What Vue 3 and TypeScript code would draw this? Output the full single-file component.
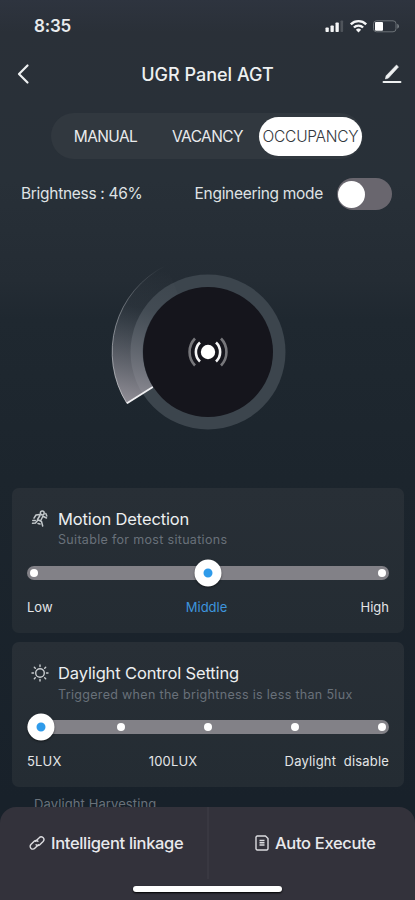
<script setup lang="ts">
import { ref } from 'vue'

interface Setting {
  id: string
  title: string
  hint: string
  stops: number[]
  active: number
  labels: { text: string; selected?: boolean }[]
}

const modes = ['MANUAL', 'VACANCY', 'OCCUPANCY']
const mode = ref('OCCUPANCY')
const engineering = ref(false)
const brightness = ref(46)

const settings = ref<Setting[]>([
  {
    id: 'motion',
    title: 'Motion Detection',
    hint: 'Suitable for most situations',
    stops: [7, 181, 355],
    active: 1,
    labels: [{ text: 'Low' }, { text: 'Middle', selected: true }, { text: 'High' }],
  },
  {
    id: 'daylight',
    title: 'Daylight Control Setting',
    hint: 'Triggered when the brightness is less than 5lux',
    stops: [14, 94, 181, 268, 355],
    active: 0,
    labels: [{ text: '5LUX' }, { text: '100LUX' }, { text: 'Daylight  disable' }],
  },
])
</script>

<template>
  <div class="screen">
    <header class="status">
      <span class="clock">8:35</span>
      <svg class="status-icons" width="78" height="16" viewBox="0 0 78 16">
        <g fill="#f4f5f6">
          <rect x="1.500" y="9.500" width="3.300" height="4.500" rx=".8" />
          <rect x="6.500" y="7.500" width="3.300" height="6.500" rx=".8" />
          <rect x="11.500" y="4.500" width="3.300" height="9.500" rx=".8" />
          <rect x="16.500" y="2.500" width="2.600" height="11.500" rx=".8" opacity=".18" />
        </g>
        <g fill="none" stroke="#f4f5f6" stroke-width="2.400">
          <path d="M26.800 6.300a11 11 0 0 1 15.400 0" />
          <path d="M29.900 9.500a6.500 6.500 0 0 1 9.200 0" />
        </g>
        <path d="M34.500 14.600l-2.600-2.800a3.700 3.700 0 0 1 5.200 0z" fill="#f4f5f6" />
        <rect x="49.500" y="2.800" width="22.500" height="11" rx="3" fill="none" stroke="#6d7378" />
        <rect x="51" y="4" width="8" height="8.800" rx="1" fill="#fff" />
        <path d="M73.300 5.800a2.700 2.700 0 0 1 0 5z" fill="#7c8287" />
      </svg>
    </header>

    <nav class="titlebar">
      <svg width="14" height="22" viewBox="0 0 14 22">
        <path d="M11.500 2.500L3 11l8.500 8.500" fill="none" stroke="#eef0f1" stroke-width="2.200" stroke-linecap="round" stroke-linejoin="round" />
      </svg>
      <h1>UGR Panel AGT</h1>
      <svg width="20" height="22" viewBox="0 0 20 22">
        <path d="M1.500 19h17" stroke="#eef0f1" stroke-width="1.900" stroke-linecap="round" />
        <path d="M3.400 16l.7-3.200L14.500 2l2 1.900L6.400 15.100z" fill="#eef0f1" stroke="#eef0f1" stroke-width=".6" stroke-linejoin="round" />
      </svg>
    </nav>

    <div class="tabs">
      <button v-for="m in modes" :key="m" :class="['tab', { on: m === mode }]" @click="mode = m">
        <span>{{ m }}</span>
      </button>
    </div>

    <div class="info">
      <span class="level">Brightness : {{ brightness }}%</span>
      <span class="eng">Engineering mode</span>
      <button :class="['switch', { on: engineering }]" aria-label="Engineering mode" @click="engineering = !engineering">
        <i></i>
      </button>
    </div>

    <div class="dial">
      <svg width="220" height="200" viewBox="90 250 220 200">
        <defs>
          <linearGradient id="sweep" gradientUnits="userSpaceOnUse" x1="160" y1="270" x2="132" y2="403">
            <stop offset="0" stop-color="#8d8b94" stop-opacity="0" />
            <stop offset=".3" stop-color="#7c828c" stop-opacity=".1" />
            <stop offset=".65" stop-color="#8d8d96" stop-opacity=".5" />
            <stop offset="1" stop-color="#a09ca4" stop-opacity=".88" />
          </linearGradient>
          <linearGradient id="edge" gradientUnits="userSpaceOnUse" x1="165" y1="266" x2="120" y2="400">
            <stop offset="0" stop-color="#aeb2b8" stop-opacity="0" />
            <stop offset=".4" stop-color="#aeb2b8" stop-opacity=".55" />
            <stop offset="1" stop-color="#d6d6da" stop-opacity=".75" />
          </linearGradient>
        </defs>
        <circle cx="208" cy="352" r="77.500" fill="#3c454d" />
        <path d="M166 265.500A96.500 96.500 0 0 0 127 403.500L153 387A65 65 0 0 1 178 294z" fill="url(#sweep)" />
        <path d="M166 265.500A96.500 96.500 0 0 0 127 403.500" fill="none" stroke="url(#edge)" stroke-width="1" />
        <circle cx="208" cy="352" r="65" fill="#15151c" />
        <path d="M127 403.300L152.800 387" stroke="#f1f1f3" stroke-width="1.800" />
        <circle cx="208" cy="352" r="7.200" fill="#fff" />
        <g fill="none" stroke-width="2.600">
          <path d="M200 342.500a13 13 0 0 0 0 19M216 342.500a13 13 0 0 1 0 19" stroke="#f4f4f5" />
          <path d="M195 338.500a19.500 19.500 0 0 0 0 27M221 338.500a19.500 19.500 0 0 1 0 27" stroke="#77777b" />
        </g>
      </svg>
    </div>

    <main class="cards">
      <section v-for="s in settings" :key="s.id" :class="['card', s.id]">
        <div class="head">
          <svg v-if="s.id === 'motion'" width="18" height="18" viewBox="0 0 18 18" fill="none" stroke="#c3c8cb" stroke-width="1.500" stroke-linecap="round" stroke-linejoin="round">
            <circle cx="11.300" cy="3" r="1.900" />
            <path d="M8.800 4.500L5 5 3 8.200M9 5.500L6.500 9.500l4 2 1.200 4.500M12 6l-2 4M12.500 6.500l3 1.500M6.500 10.500l-2 2.500-3 .2M14.800 3.500l1 2.500M1.800 10.500h2.500M7 13.500l2 .5" />
          </svg>
          <svg v-else width="18" height="18" viewBox="0 0 18 18" fill="none" stroke="#c9cdd0" stroke-width="1.400" stroke-linecap="round">
            <circle cx="9" cy="9" r="4.300" />
            <path d="M9 1v1.500M9 15.500V17M1 9h1.500M15.500 9H17M3.300 3.300l1 1M13.700 13.700l1 1M3.300 14.700l1-1M13.700 4.300l1-1" />
          </svg>
          <div>
            <h2>{{ s.title }}</h2>
            <p>{{ s.hint }}</p>
          </div>
        </div>
        <div class="track">
          <i
            v-for="(x, i) in s.stops"
            :key="i"
            :class="['stop', { thumb: i === s.active }]"
            :style="{ left: x + 'px' }"
          ></i>
        </div>
        <div class="labels">
          <span v-for="l in s.labels" :key="l.text" :class="{ selected: l.selected }">{{ l.text }}</span>
        </div>
      </section>
      <p class="next">Daylight Harvesting</p>
    </main>

    <footer class="bottom">
      <div class="actions">
        <button class="link">
          <svg width="16" height="16" viewBox="0 0 16 16" fill="none" stroke="#dcdce0" stroke-width="1.400" stroke-linecap="round">
            <path d="M6.600 6.300l3.600-3.600a2.600 2.600 0 0 1 3.900 3.700l-3.300 3.300a2.600 2.600 0 0 1-3.700 0" />
            <path d="M9.400 9.700l-3.600 3.600a2.600 2.600 0 0 1-3.900-3.700l3.300-3.300a2.600 2.600 0 0 1 3.700 0" />
          </svg>
          <span>Intelligent linkage</span>
        </button>
        <button class="auto">
          <svg width="14" height="16" viewBox="0 0 14 16" fill="none" stroke="#dcdce0" stroke-width="1.400" stroke-linejoin="round">
            <path d="M2 1h8.500L13 3.500V14l-1 1H2l-1-1V2z" />
            <path d="M4.500 5.500h5M4.500 7.800h5M4.500 10.100h5" stroke-width="1.500" />
          </svg>
          <span>Auto Execute</span>
        </button>
      </div>
      <div class="home"></div>
    </footer>
  </div>
</template>

<style>
body {
  background: #18202a;
}
</style>

<style scoped>
.screen {
  width: 415px;
  height: 900px;
  overflow: hidden;
  display: flex;
  flex-direction: column;
  position: relative;
  background: linear-gradient(#2e343f 0, #2a3038 32px, #283038 180px, #242c34 280px, #1f2830 320px, #1c252d 480px, #18212a 800px);
  font-family: Inter, Roboto, sans-serif;
  color: #e9ebed;
}
h1, h2, p { margin: 0; font-weight: 400; white-space: nowrap; }
button { border: 0; padding: 0; background: none; font: inherit; color: inherit; }
svg { flex: none; display: block; }
span { white-space: pre; }

.status {
  height: 50px;
  box-sizing: border-box;
  padding: 16px 13px 0 34px;
  display: flex;
  justify-content: space-between;
}
.clock { font-size: 17px; line-height: 20px; font-weight: 600; letter-spacing: -.2px; }
.status-icons { margin-top: 2px; }

.titlebar {
  height: 48px;
  padding: 0 13px 0 16px;
  display: flex;
  align-items: center;
  justify-content: space-between;
}
h1 { font-size: 18px; font-weight: 500; color: #eef0f1; padding-left: 3px; }

.tabs {
  margin: 15px 0 0 51px;
  width: 312px;
  height: 46px;
  box-sizing: border-box;
  padding-right: 1px;
  border-radius: 23px;
  background: #31383f;
  display: flex;
  align-items: center;
}
.tab {
  box-sizing: border-box;
  height: 39px;
  width: 104px;
  display: flex;
  justify-content: center;
  align-items: center;
  font-size: 15.500px;
  letter-spacing: -.6px;
}
.tab:first-child { padding-left: 5px; }
.tab:nth-child(2) { padding-left: 1px; }
.tab.on {
  width: 103px;
  background: #fff;
  color: #34383d;
  border-radius: 20px;
  font-weight: 300;
  letter-spacing: -.25px;
}

.info {
  height: 38px;
  margin-top: 15px;
  padding: 1px 23px 0 21px;
  display: flex;
  align-items: center;
  font-size: 15.500px;
  letter-spacing: -.3px;
  color: #dfe2e4;
}
.info span { margin-top: -1px; }
.eng { margin-left: auto; }
.switch {
  width: 55px;
  height: 32px;
  margin-left: 14px;
  border-radius: 16px;
  background: #69666e;
  display: flex;
  align-items: center;
}
.switch i { width: 27px; height: 27px; margin-left: 1px; border-radius: 50%; background: #fff; }
.switch.on { justify-content: flex-end; }

.dial { padding: 37px 0 38px 90px; }

.cards { padding: 0 11px 0 12px; }
.card {
  height: 145px;
  box-sizing: border-box;
  padding: 22px 15px 0;
  margin-bottom: 9px;
  border-radius: 7px;
  background: linear-gradient(#282f36, #242c33);
}
.head { display: flex; gap: 9px; padding-left: 4px; height: 56px; }
h2 { font-size: 16.500px; line-height: 19px; color: #eceef0; letter-spacing: -.13px; }
.head p { font-size: 12.500px; line-height: 16px; margin-top: 3px; color: #69717a; letter-spacing: .32px; }
.daylight .head p { margin-top: 4px; }
.track {
  position: relative;
  height: 14px;
  border-radius: 7px;
  background: #828187;
}
.stop {
  position: absolute;
  top: 50%;
  width: 8px;
  height: 8px;
  border-radius: 50%;
  background: #fff;
  transform: translate(-50%, -50%);
}
.stop.thumb {
  width: 9px;
  height: 9px;
  background: #2f9bea;
  border: 9.500px solid #fff;
  box-shadow: 0 1px 2px #0008;
}
.labels {
  display: flex;
  justify-content: space-between;
  margin-top: 19px;
  font-size: 13px;
  line-height: 16px;
  color: #e3e5e7;
}
.daylight .labels { letter-spacing: .18px; }
.selected { color: #3e94dc; }
.next { margin: 9px 0 0 22px; font-size: 13px; line-height: 16px; color: #69717a; letter-spacing: .1px; }

.bottom {
  position: absolute;
  inset: auto 0 0;
  height: 93px;
  border-radius: 16px 16px 0 0;
  background: #33323b;
}
.actions { display: flex; height: 72px; }
.actions button {
  box-sizing: border-box;
  display: flex;
  align-items: center;
  font-size: 16.500px;
  font-weight: 500;
  letter-spacing: -.33px;
  color: #e9e9ec;
}
.actions .link { width: 209px; padding-left: 29px; gap: 6px; border-right: 2px solid #393841; }
.actions .auto { flex: 1; padding-left: 46px; gap: 6px; }
.home { width: 149px; height: 6px; margin: 7px 0 0 133px; border-radius: 3px; background: #fff; box-shadow: 0 1px 2px #000; }
</style>
